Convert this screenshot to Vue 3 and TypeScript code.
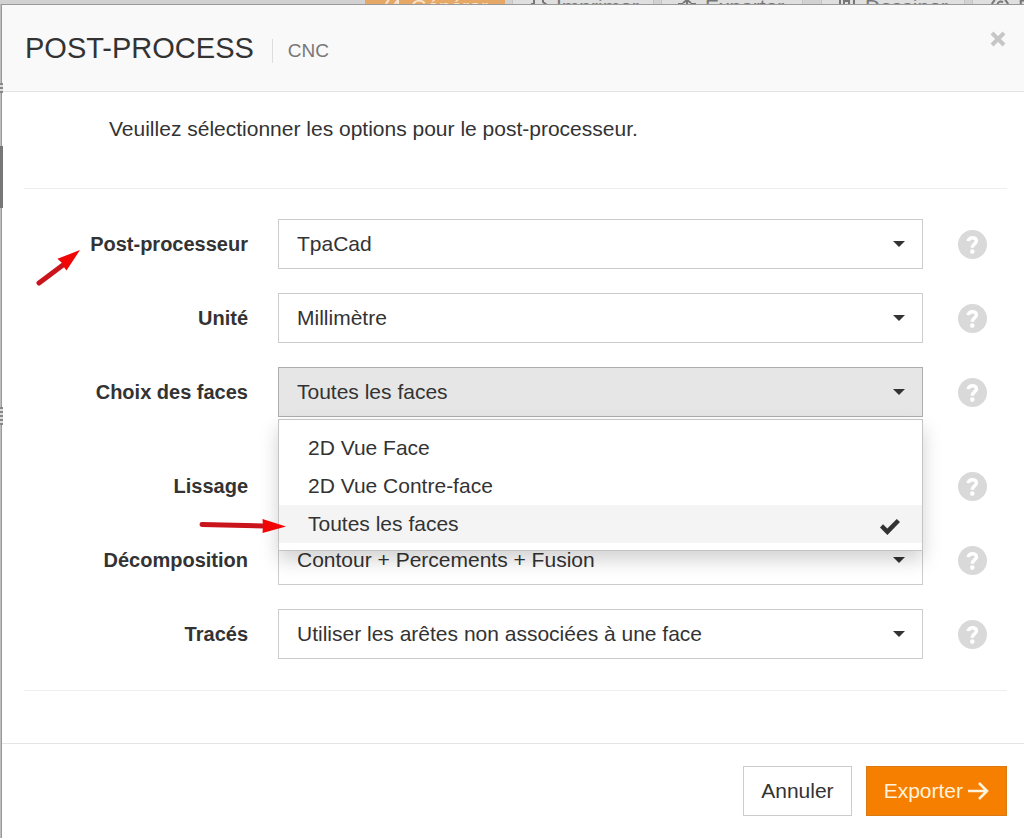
<script setup lang="ts">
import { ref } from 'vue'

interface Field {
  id: string
  label: string
  value: string
  options: string[]
  pointer?: boolean
}

const groups = ref<Field[][]>([
  [
    { id: 'post', label: 'Post-processeur', value: 'TpaCad', options: ['TpaCad'], pointer: true },
    { id: 'unit', label: 'Unité', value: 'Millimètre', options: ['Millimètre'] },
    {
      id: 'faces',
      label: 'Choix des faces',
      value: 'Toutes les faces',
      options: ['2D Vue Face', '2D Vue Contre-face', 'Toutes les faces'],
    },
  ],
  [
    { id: 'smooth', label: 'Lissage', value: '', options: [''] },
    {
      id: 'split',
      label: 'Décomposition',
      value: 'Contour + Percements + Fusion',
      options: ['Contour + Percements + Fusion'],
    },
    {
      id: 'traces',
      label: 'Tracés',
      value: 'Utiliser les arêtes non associées à une face',
      options: ['Utiliser les arêtes non associées à une face'],
    },
  ],
])

const openId = ref('faces')

function toggle(id: string) {
  openId.value = openId.value === id ? '' : id
}

function choose(field: Field, option: string) {
  field.value = option
  openId.value = ''
}
</script>

<template>
  <div class="page">
    <div class="toolbar" aria-hidden="true">
      <span class="tool primary">
        <svg width="22" height="16" viewBox="0 0 22 16"><path d="M5 0Q1 3 2 9M10 5L14 0V5H9" /></svg>Générer
      </span>
      <span class="tool">
        <svg width="22" height="16" viewBox="0 0 22 16"><path d="M5 0V4H2M14 0V2L18 5" /></svg>Imprimer
      </span>
      <span class="tool">
        <svg width="22" height="16" viewBox="0 0 22 16"><path d="M9 8V0M5 3L9 0L13 3M1 9V4H5M13 4H17V9" /></svg>Exporter
      </span>
      <span class="tool wide">
        <svg width="22" height="16" viewBox="0 0 22 16"><path d="M2 0V10M6 1H11V8H6ZM16 0V10" /></svg>Dessiner
      </span>
      <span class="tool last">
        <svg width="24" height="16" viewBox="0 0 24 16"><path d="M6 0Q1 4 3 11M16 0Q21 4 19 11M14 2Q9 0 8 6M9 5H14" /></svg>Pr
      </span>
    </div>

    <div class="gutter" aria-hidden="true">
      <i class="marks short"></i>
      <i class="thumb"></i>
      <i class="marks"></i>
    </div>

    <section class="modal" role="dialog" aria-labelledby="title">
      <header class="head">
        <h1 id="title">POST-PROCESS</h1>
        <span class="sub">CNC</span>
        <button class="close" type="button" aria-label="Fermer">
          <svg width="16" height="16" viewBox="0 0 16 16"><path d="M2 2L14 14M14 2L2 14" /></svg>
        </button>
      </header>

      <div class="body">
        <p class="intro">Veuillez sélectionner les options pour le post-processeur.</p>

        <div class="form">
          <div v-for="(group, g) in groups" :key="g" class="group">
            <div v-for="field in group" :key="field.id" class="row">
              <label :for="field.id">{{ field.label }}</label>
              <div class="control">
                <select
                  :id="field.id"
                  v-model="field.value"
                  :class="{ open: openId === field.id }"
                  @mousedown.prevent="toggle(field.id)"
                >
                  <option v-for="option in field.options" :key="option">{{ option }}</option>
                </select>
                <svg class="caret" width="12" height="6" viewBox="0 0 12 6"><path d="M0 0H12L6 6Z" /></svg>
                <div v-if="openId === field.id" class="menu">
                  <button
                    v-for="option in field.options"
                    :key="option"
                    type="button"
                    :class="{ selected: option === field.value }"
                    @click="choose(field, option)"
                  >
                    <span>{{ option }}</span>
                    <svg v-if="option === field.value" width="20" height="16" viewBox="0 0 20 16">
                      <path d="M0 8.5L3 5.3L7.3 9.4L16.8 0L20 3L7.4 16Z" />
                    </svg>
                  </button>
                </div>
              </div>
              <button class="help" type="button" :aria-label="'Aide : ' + field.label">
                <svg width="29" height="29" viewBox="0 0 29 29">
                  <circle cx="14.5" cy="14.5" r="14.5" />
                  <path d="M10.2 11.2C10.4 6.6 18.6 6.6 18.4 11C18.3 14 14.3 13.8 14.3 17.8" />
                  <circle class="dot" cx="14.3" cy="21.6" r="2.3" />
                </svg>
              </button>
              <svg v-if="field.pointer" class="arrow up" width="48" height="40" viewBox="0 0 48 40">
                <path class="shaft" d="M4 36L28 18" />
                <path class="tip" d="M45 3L22.5 11.8L27 16L28.5 19.5L31.5 23.5Z" />
              </svg>
              <svg v-if="field.id === 'smooth'" class="arrow side" width="90" height="20" viewBox="0 0 90 20">
                <path class="shaft" d="M4 8.5L66 10" />
                <path class="tip" d="M88 10.5L64.5 3L65 10L64.5 17Z" />
              </svg>
            </div>
          </div>
        </div>
      </div>

      <footer class="foot">
        <button class="btn" type="button">Annuler</button>
        <button class="btn main" type="button">
          Exporter
          <svg width="22" height="20" viewBox="0 0 22 20"><path d="M1 10H20M12 2L20 10L12 18" /></svg>
        </button>
      </footer>
    </section>
  </div>
</template>

<style>
body {
  margin: 0;
}
</style>

<style scoped>
.page,
.page * {
  box-sizing: border-box;
}

.page {
  display: grid;
  grid-template-columns: 1px 1fr;
  grid-template-rows: 4px 1fr;
  min-height: 100vh;
  overflow: hidden;
  background: #bdbdbd;
  color: #333;
  font: 21px/24px 'Liberation Sans', Arial, sans-serif;
}

.toolbar {
  grid-column: 1 / -1;
  display: flex;
  gap: 7px;
  padding-left: 365px;
  overflow: hidden;
  background: #d2d2d2;
}

.tool {
  flex: none;
  display: flex;
  gap: 5px;
  width: 142px;
  height: 28px;
  padding-left: 16px;
  line-height: 14px;
  background: #dfdfdf;
  border: solid #c4c4c4;
  border-width: 0 1px;
  color: #777;
}

.tool svg {
  flex: none;
  fill: none;
  stroke: currentColor;
  stroke-width: 2;
}

.tool.primary {
  width: 140px;
  padding-left: 18px;
  background: #e6a867;
  border-color: #e6a867;
  color: #f8e6d2;
}

.tool.wide {
  width: 144px;
  margin-left: 11px;
}

.gutter {
  position: relative;
  z-index: 1;
  display: flex;
  flex-direction: column;
}

.marks {
  width: 3px;
  height: 18px;
  margin-top: 199px;
  background: repeating-linear-gradient(#888 0 2px, #ddd 2px 4px);
}

.marks.short {
  height: 10px;
  margin-top: 79px;
}

.thumb {
  width: 3px;
  height: 62px;
  margin-top: 53px;
  background: #777;
}

.modal {
  display: flex;
  flex-direction: column;
  min-width: 0;
  background: #fff;
  border: solid #999;
  border-width: 1px 0 0 1px;
}

.head {
  display: flex;
  align-items: center;
  height: 87px;
  padding: 0 18px 0 23px;
  background: #f9f9f9;
  border-bottom: 1px solid #e3e3e3;
}

h1 {
  margin: 0;
  font-size: 29px;
  font-weight: 400;
  line-height: 36px;
}

.sub {
  margin: 6px auto 0 18px;
  padding-left: 15px;
  border-left: 1px solid #ddd;
  color: #777;
  font-size: 19px;
}

button {
  font: inherit;
  color: inherit;
  cursor: pointer;
}

.close {
  display: flex;
  margin-bottom: 18px;
  padding: 0;
  border: 0;
  background: none;
}

.close path {
  stroke: #c6c6c6;
  stroke-width: 4;
}

.body {
  padding: 0 17px 0 22px;
}

.intro {
  margin: 0;
  padding: 25px 0 47px 85px;
}

.form {
  display: flex;
  flex-direction: column;
  gap: 44px;
  padding: 30px 20px 31px 0;
  border: solid #eee;
  border-width: 1px 0;
}

.group {
  display: flex;
  flex-direction: column;
  gap: 24px;
}

.row {
  position: relative;
  display: grid;
  grid-template-columns: 224px 1fr 29px;
  column-gap: 30px;
  align-items: center;
}

label {
  font-size: 20px;
  font-weight: 700;
  text-align: right;
}

.control {
  position: relative;
  margin-right: 5px;
}

select {
  display: block;
  width: 100%;
  height: 50px;
  padding: 0 50px 0 18px;
  appearance: none;
  background: #fff;
  border: 1px solid #ccc;
  border-radius: 0;
  outline: 0;
  color: #333;
  font: inherit;
}

select.open {
  background: #e6e6e6;
  border-color: #adadad;
}

.caret {
  position: absolute;
  top: 22px;
  right: 18px;
  fill: #333;
  pointer-events: none;
}

.menu {
  position: absolute;
  z-index: 2;
  top: 52px;
  left: 0;
  right: 0;
  padding: 9px 0 7px;
  background: #fff;
  border: 1px solid #c4c4c4;
  box-shadow: 0 9px 18px rgba(0, 0, 0, 0.18);
}

.menu button {
  display: flex;
  align-items: center;
  justify-content: space-between;
  width: 100%;
  height: 38px;
  padding: 0 22px 0 29px;
  background: none;
  border: 0;
}

.menu button.selected {
  background: #f4f4f4;
}

.menu svg {
  margin-top: 6px;
  fill: #333;
}

.help {
  display: flex;
  padding: 0;
  background: none;
  border: 0;
}

.help circle {
  fill: #d9d9d9;
}

.help .dot {
  fill: #fff;
}

.help path {
  fill: none;
  stroke: #fff;
  stroke-width: 3.5;
}

.arrow {
  position: absolute;
  z-index: 3;
  pointer-events: none;
}

.arrow.up {
  top: 28px;
  left: 11px;
}

.arrow.side {
  top: 55px;
  left: 174px;
}

.shaft {
  stroke: #c9141c;
  stroke-width: 5;
  stroke-linecap: round;
}

.tip {
  fill: #f20505;
}

.foot {
  display: flex;
  justify-content: flex-end;
  gap: 14px;
  margin-top: 52px;
  padding: 22px 17px;
  border-top: 1px solid #e5e5e5;
}

.btn {
  display: flex;
  align-items: center;
  gap: 4px;
  height: 50px;
  padding: 0 17px;
  background: #fff;
  border: 1px solid #ccc;
}

.btn.main {
  background: #f77f00;
  border-color: #d87a16;
  color: #fff3dc;
}

.btn svg {
  fill: none;
  stroke: currentColor;
  stroke-width: 2.6;
}
</style>
